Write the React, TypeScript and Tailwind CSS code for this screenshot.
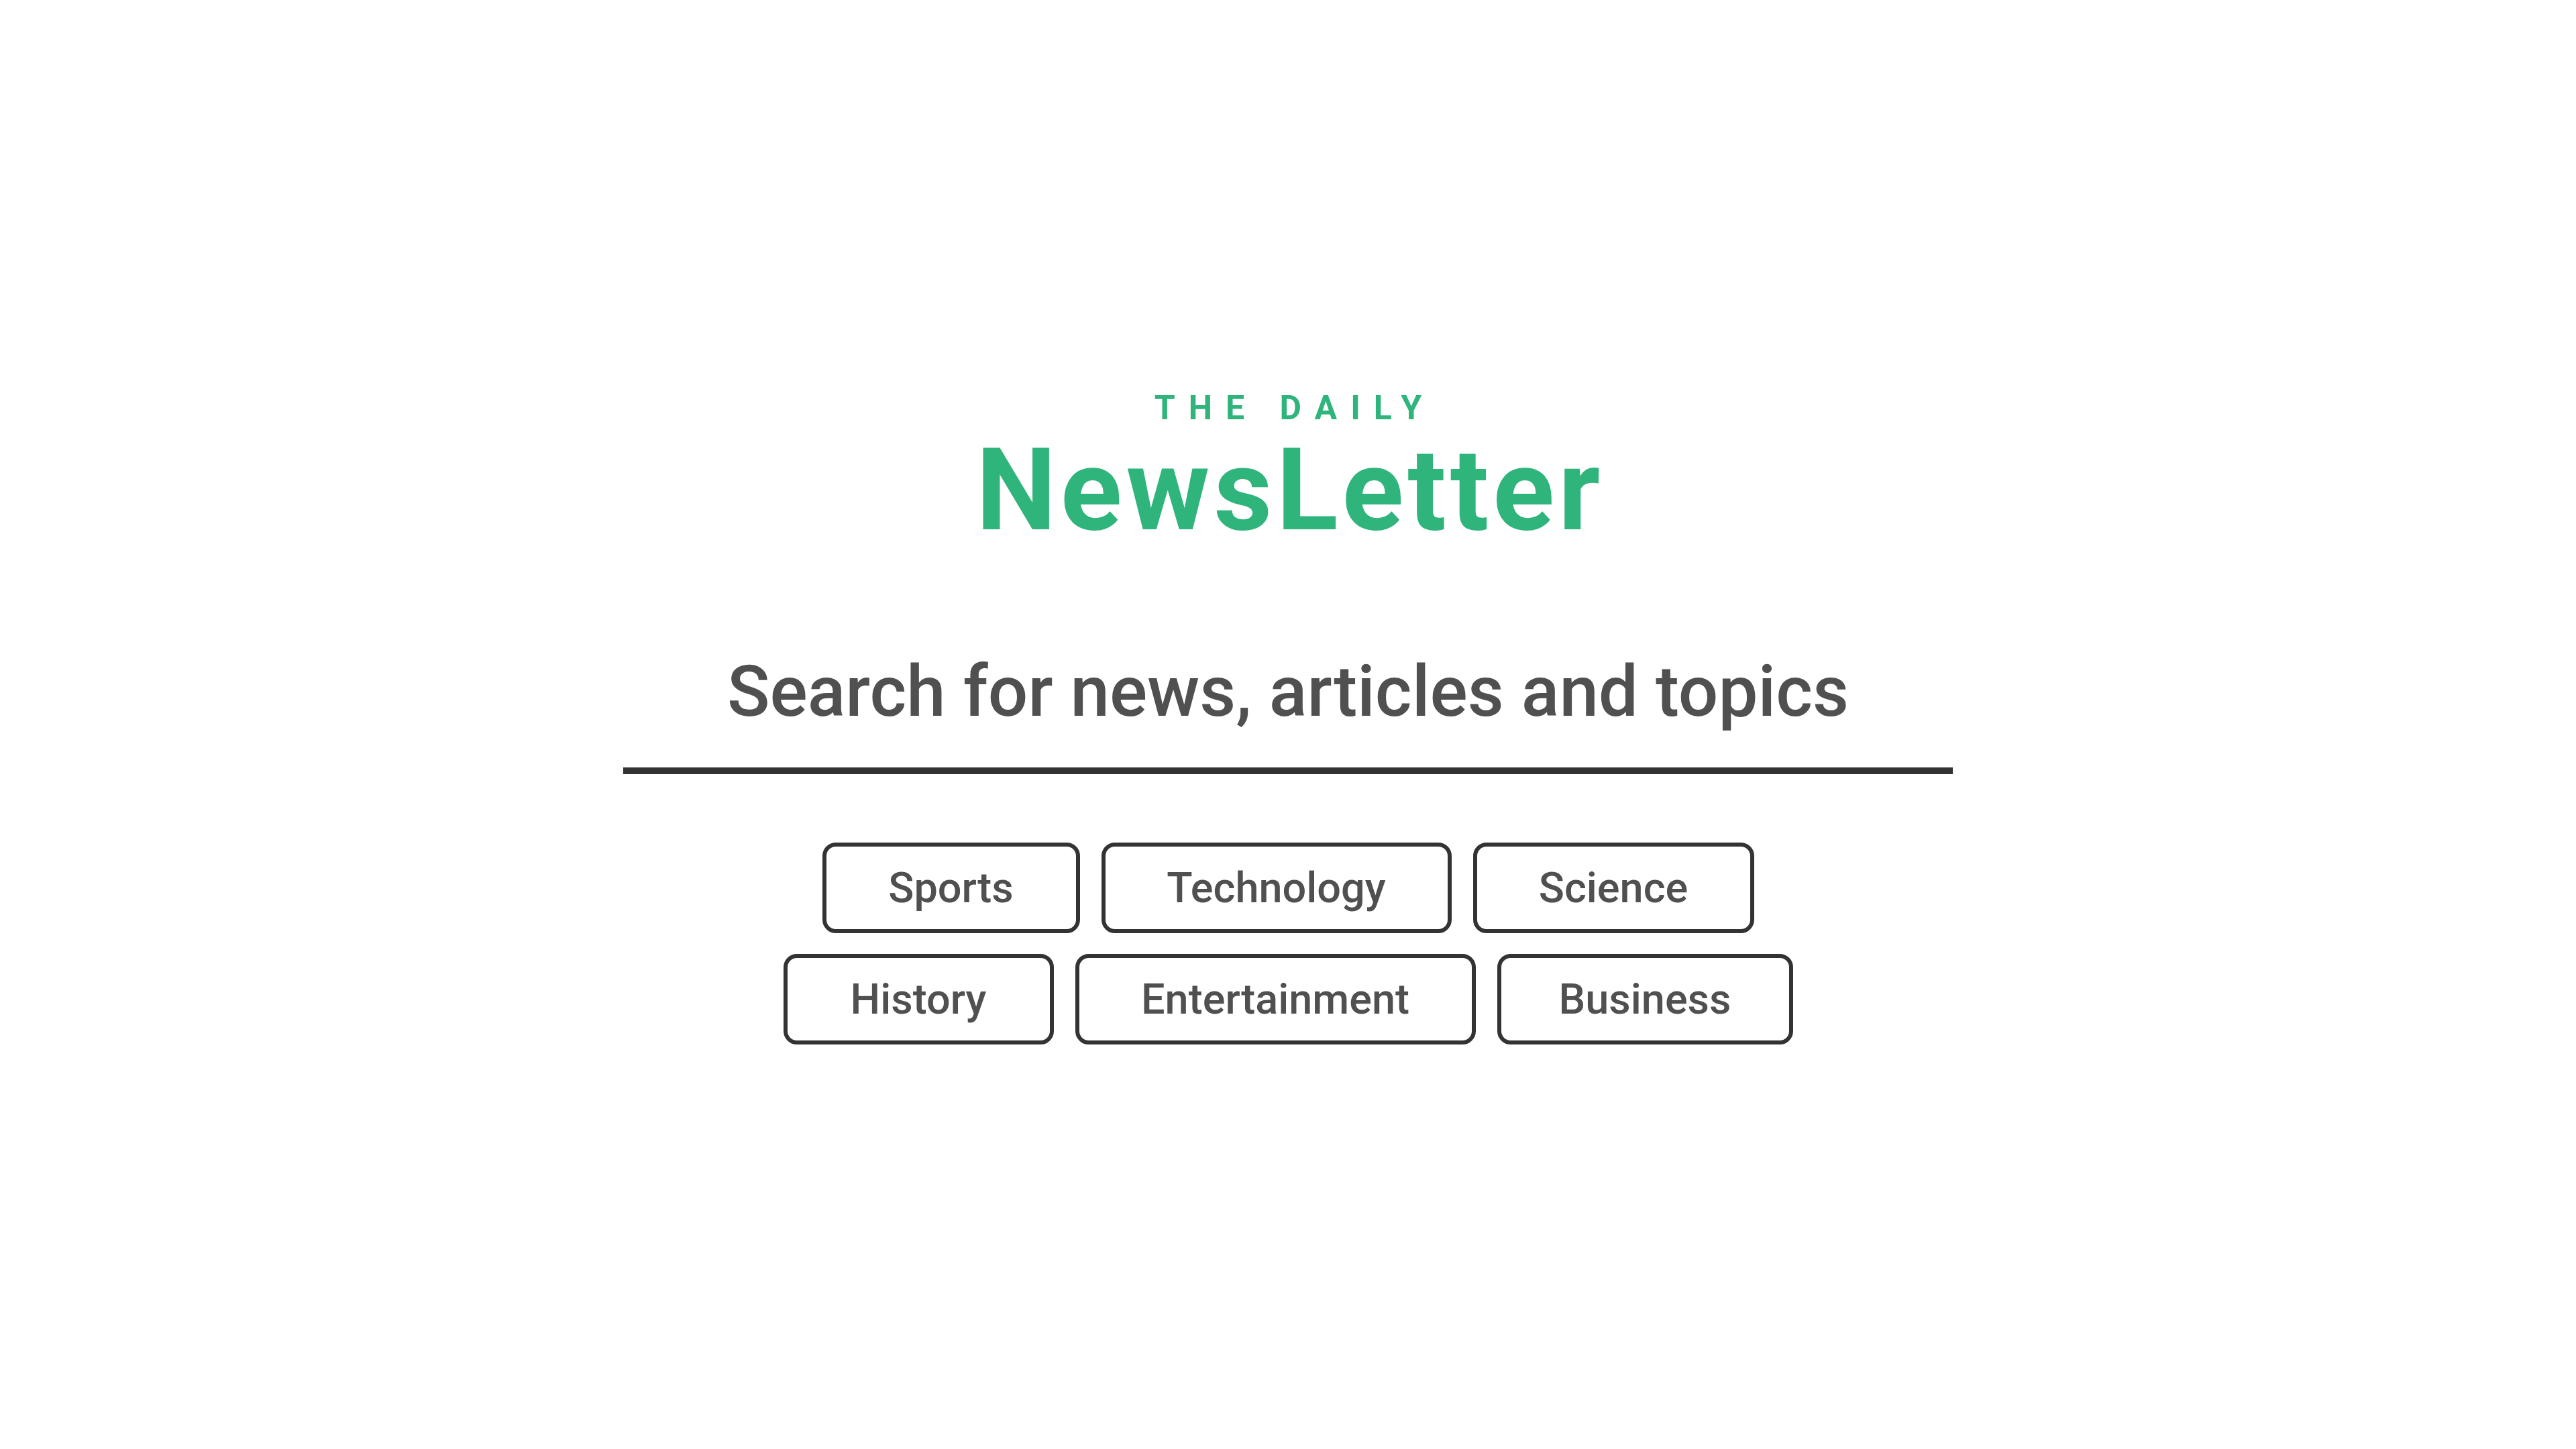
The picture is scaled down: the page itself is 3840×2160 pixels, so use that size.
const rows = [
  [
    { label: 'Sports', w: 'w-[384px]' },
    { label: 'Technology', w: 'w-[522px]' },
    { label: 'Science', w: 'w-[419px]' },
  ],
  [
    { label: 'History', w: 'w-[403px]' },
    { label: 'Entertainment', w: 'w-[597px]' },
    { label: 'Business', w: 'w-[441px]' },
  ],
];

function TopicButton({ label, w }: { label: string; w: string }) {
  return (
    <button
      type="button"
      className={`${w} flex h-[135px] items-center justify-center rounded-[20px] border-[6px] border-[#333333] bg-white text-[63px] leading-none font-medium text-[#505050]`}
    >
      {label}
    </button>
  );
}

export default function App() {
  return (
    <div
      className="flex min-h-screen flex-col items-center bg-white pt-[583px]"
      style={{ fontFamily: 'Roboto, "Noto Sans", sans-serif' }}
    >
      <div className="pl-[0.4em] text-[50px] leading-none font-bold tracking-[0.4em] text-[#2fb47c]">THE DAILY</div>
      <h1 className="mt-[13px] pl-[0.035em] text-[170px] leading-none font-bold tracking-[0.035em] text-[#2fb47c]">
        NewsLetter
      </h1>

      <div className="mt-[163px] w-[1982px] border-b-[10px] border-[#333333] pb-[60px] text-center text-[105px] leading-none font-medium text-[#505050]">
        Search for news, articles and topics
      </div>

      <div className="mt-[102px] flex flex-col items-center gap-[31px]">
        {rows.map((row) => (
          <div key={row[0].label} className="flex gap-[32px]">
            {row.map((t) => (
              <TopicButton key={t.label} label={t.label} w={t.w} />
            ))}
          </div>
        ))}
      </div>
    </div>
  );
}
